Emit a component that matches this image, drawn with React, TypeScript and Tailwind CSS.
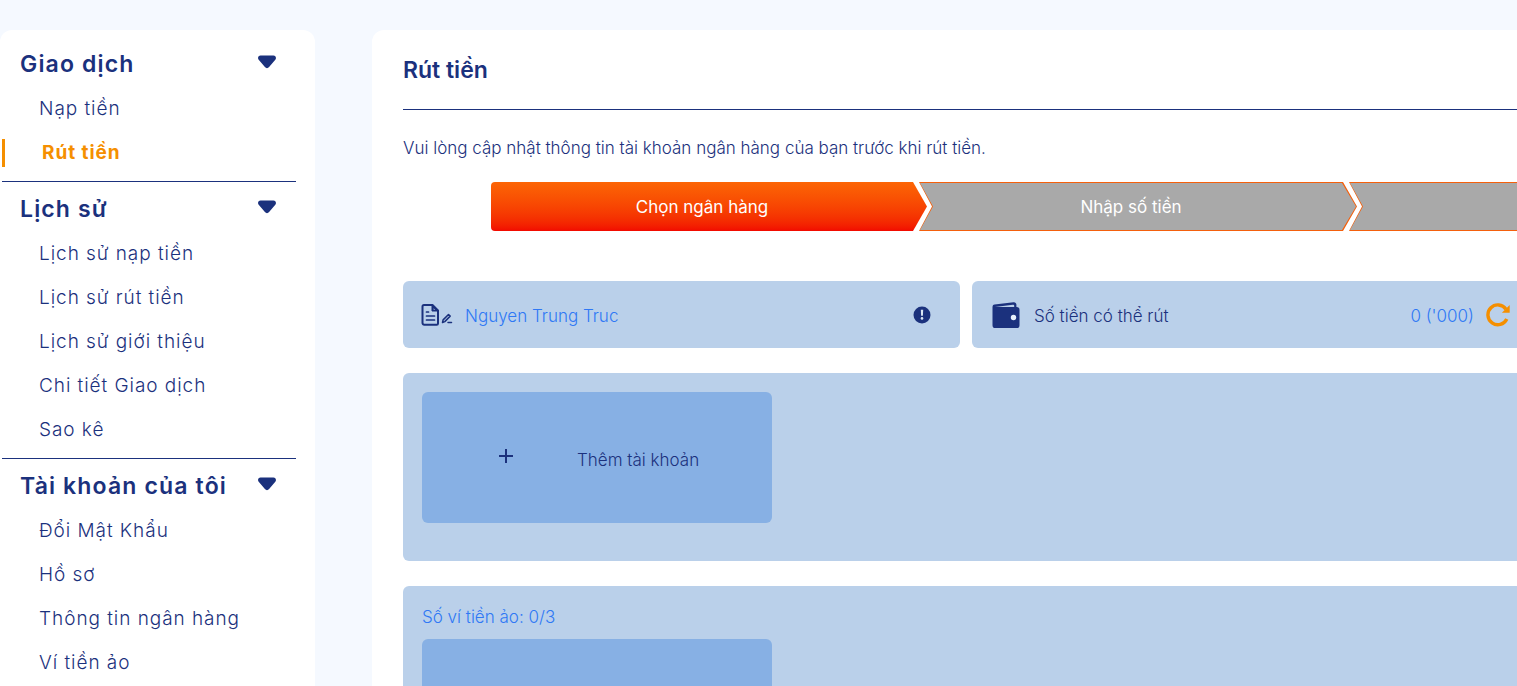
import type { ReactNode } from "react";

const sections = [
  { title: "Giao dịch", items: ["Nạp tiền", "Rút tiền"] },
  {
    title: "Lịch sử",
    items: ["Lịch sử nạp tiền", "Lịch sử rút tiền", "Lịch sử giới thiệu", "Chi tiết Giao dịch", "Sao kê"],
  },
  {
    title: "Tài khoản của tôi",
    items: ["Đổi Mật Khẩu", "Hồ sơ", "Thông tin ngân hàng", "Ví tiền ảo"],
  },
];

const active = "Rút tiền";

function CaretIcon() {
  return (
    <svg width="18" height="14" viewBox="0 0 18 14" fill="currentColor" aria-hidden="true">
      <path d="M2.500 .5h13c2.200 0 3.200 2.600 1.800 4.300l-6.200 7.300c-1.200 1.500-3 1.500-4.200 0L.7 4.800C-.7 3.100.3.5 2.500.5Z" />
    </svg>
  );
}

function DocumentIcon() {
  return (
    <svg width="32" height="24" viewBox="0 0 32 24" fill="none" stroke="currentColor" strokeWidth="2" strokeLinejoin="round" strokeLinecap="round" aria-hidden="true">
      <path d="M3 2h8.500L17 7.500V20.500a1.300 1.300 0 0 1-1.300 1.300H3.300A1.800 1.800 0 0 1 1.500 20V3.500A1.500 1.500 0 0 1 3 2Z" />
      <path d="M11 2v6h6Z" fill="currentColor" strokeWidth="1" />
      <path d="M12.600 5.200v1.600h1.600Z" fill="#bad0ea" stroke="none" />
      <path d="M5.500 9h2M5.500 13h8M5.500 17h8" strokeWidth="1.700" />
      <path d="m21.500 19.500.6-2.600 5.400-5.400 1.700 1.600-5.400 5.500ZM27 19.500h3.500" strokeWidth="1.500" />
    </svg>
  );
}

function WalletIcon() {
  return (
    <svg width="28" height="28" viewBox="0 0 28 28" fill="currentColor" aria-hidden="true">
      <path d="M2.500 3.600 21.500 1.200c1.600-.2 2.900.8 2.900 2.400V6h.2A2.900 2.900 0 0 1 27.500 9v15.200a2.900 2.900 0 0 1-2.900 2.900H3.400A2.900 2.900 0 0 1 .5 24.200V6.300c0-1.500.7-2.500 2-2.700Z" />
      <path d="M3 5.900 20.800 3.800c.8-.1 1.400.3 1.400 1V6H3.200c-.8 0-.8-.1-.2-.1Z" fill="#bad0ea" />
      <circle cx="21.500" cy="16.500" r="2.700" fill="#e7f0fb" />
    </svg>
  );
}

function AlertIcon() {
  return (
    <svg width="18" height="18" viewBox="0 0 18 18" aria-hidden="true">
      <circle cx="9" cy="9" r="8.500" fill="currentColor" />
      <path d="M7.800 3.800h2.400l-.3 6H8.100Z" fill="#dbe7f5" />
      <circle cx="9" cy="12.400" r="1.300" fill="#dbe7f5" />
    </svg>
  );
}

function RefreshIcon() {
  return (
    <svg width="24" height="24" viewBox="0 0 24 24" fill="none" aria-hidden="true">
      <path d="M20 6.200A9.900 9.900 0 1 0 20.800 16" stroke="currentColor" strokeWidth="3.400" />
      <path d="M23.700 2v7.800h-7.800Z" fill="currentColor" />
    </svg>
  );
}

function Step({ children }: { children: ReactNode }) {
  return (
    <li className="-ml-2 h-[49px] w-[438px] shrink-0 bg-[#f4600c] p-px [clip-path:polygon(0_0,calc(100%-14px)_0,100%_50%,calc(100%-14px)_100%,0_100%,13px_50%)]">
      <div className="flex h-full items-center justify-center bg-[#a9a9a9] pr-3.5 [clip-path:polygon(0_0,calc(100%-14px)_0,100%_50%,calc(100%-14px)_100%,0_100%,13px_50%)]">
        {children}
      </div>
    </li>
  );
}

function AddButton() {
  return (
    <button type="button" className="flex h-[131px] w-[350px] items-center rounded-md bg-[#87b0e4] pl-[77px]">
      <svg width="14" height="14" viewBox="0 0 14 14" className="mb-1 shrink-0" stroke="currentColor" strokeWidth="2" aria-hidden="true">
        <path d="M7 0v14M0 7h14" />
      </svg>
      <span className="ml-16 mt-1 font-light">Thêm tài khoản</span>
    </button>
  );
}

function Sidebar() {
  return (
    <nav className="w-[315px] shrink-0 rounded-t-xl bg-white pl-0.5 pr-[19px] pt-[7px]">
      {sections.map((section) => (
        <section key={section.title} className="border-b border-[#1b317d] pb-1.5">
          <button type="button" className="flex h-[50px] w-full items-center justify-between pl-[18px] pr-5">
            <span className="pt-1 text-[23px] font-semibold leading-7 tracking-wider">{section.title}</span>
            <CaretIcon />
          </button>
          <ul>
            {section.items.map((item) => (
              <li key={item} className="flex h-11 items-center">
                <a
                  href="#"
                  className={
                    item === active
                      ? "border-l-3 border-[#f58f00] pl-[37px] text-[19px] font-bold leading-7 tracking-wider text-[#f58f00]"
                      : "pl-[37px] text-[19px] font-light leading-7 tracking-wider"
                  }
                >
                  {item}
                </a>
              </li>
            ))}
          </ul>
        </section>
      ))}
    </nav>
  );
}

export default function App() {
  return (
    <div className="flex h-screen gap-[57px] overflow-hidden bg-[#f5f9ff] pt-[30px] font-['Inter','Noto_Sans',sans-serif] text-[#1b317d]">
      <Sidebar />

      <main className="-mr-[43px] min-w-0 flex-1 rounded-t-xl bg-white px-[31px] text-[17px] leading-6">
        <h1 className="border-b border-[#1b317d] pb-[25px] pt-[26px] text-[23px] font-semibold leading-7">Rút tiền</h1>
        <p className="pt-[26px] font-light">
          Vui lòng cập nhật thông tin tài khoản ngân hàng của bạn trước khi rút tiền.
        </p>

        <ol className="ml-[88px] mt-[22px] flex text-white">
          <li className="flex h-[49px] w-[436px] shrink-0 items-center justify-center rounded-l bg-linear-to-b from-[#fc6505] to-[#f20800] pr-3.5 [clip-path:polygon(0_0,calc(100%-14px)_0,100%_50%,calc(100%-14px)_100%,0_100%)]">
            Chọn ngân hàng
          </li>
          <Step>Nhập số tiền</Step>
          <Step>Hoàn tất</Step>
        </ol>

        <div className="mt-[50px] grid grid-cols-2 gap-3 font-light">
          <div className="flex h-[67px] items-center rounded-md bg-[#bad0ea] pl-[18px] pr-[29px]">
            <DocumentIcon />
            <span className="ml-3 mt-0.5 flex-1 text-[#2f78f5]">Nguyen Trung Truc</span>
            <AlertIcon />
          </div>
          <div className="flex h-[67px] items-center rounded-md bg-[#bad0ea] pl-5 pr-[19px]">
            <WalletIcon />
            <span className="ml-[14px] mt-0.5 flex-1">Số tiền có thể rút</span>
            <span className="mr-3 mt-0.5 text-[#2f78f5]">0 ('000)</span>
            <button type="button" aria-label="Làm mới" className="text-[#f58f00]">
              <RefreshIcon />
            </button>
          </div>
        </div>

        <section className="mt-[25px] rounded-md bg-[#bad0ea] px-[19px] pb-[38px] pt-[19px]">
          <AddButton />
        </section>

        <section className="mt-[25px] rounded-md bg-[#bad0ea] px-[19px] pb-[38px] pt-[19px]">
          <h2 className="pb-2.5 font-light text-[#2f78f5]">Số ví tiền ảo: 0/3</h2>
          <AddButton />
        </section>
      </main>
    </div>
  );
}
